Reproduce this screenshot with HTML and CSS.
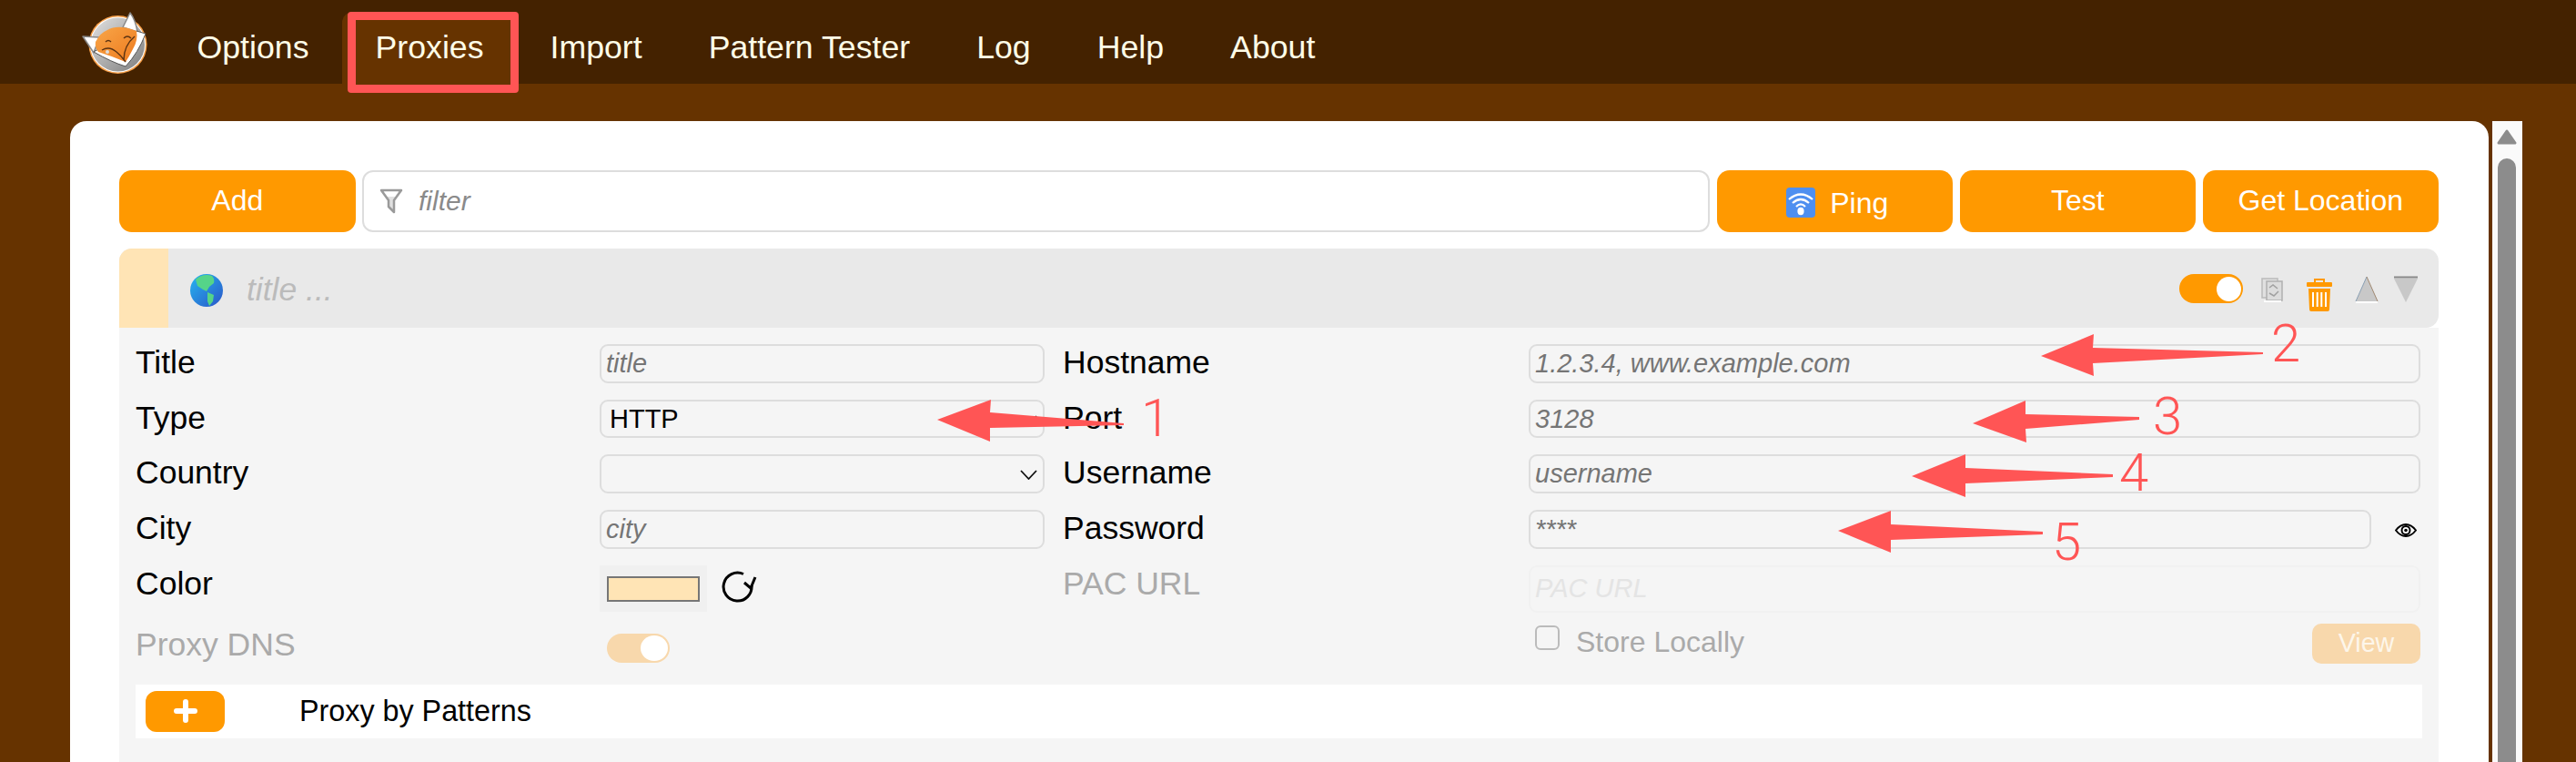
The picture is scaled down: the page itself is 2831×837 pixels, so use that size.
FILE: index.html
```html
<!DOCTYPE html>
<html lang="en">
<head>
<meta charset="utf-8">
<title>FoxyProxy Options</title>
<link rel="stylesheet" href="styles.css">
</head>
<body>
<header class="topbar">
  <svg class="logo" viewBox="90 12 75 70" width="75" height="70" aria-hidden="true">
    <defs>
      <linearGradient id="disc" x1="0" y1="0" x2="1" y2="1"><stop offset="0" stop-color="#e2e2e2"/><stop offset="1" stop-color="#7d7d7d"/></linearGradient>
      <linearGradient id="face" x1="0" y1="0" x2="1" y2="1"><stop offset="0" stop-color="#f8a648"/><stop offset="1" stop-color="#ee7a1e"/></linearGradient>
    </defs>
    <circle cx="129.5" cy="49" r="32" fill="#f7a04a"/>
    <circle cx="129.5" cy="49" r="30.500" fill="#fff"/>
    <circle cx="129.5" cy="49" r="29.500" fill="url(#disc)"/>
    <path d="M91 40 L109 41 L103 58 Z" fill="#fff" stroke="#888" stroke-width="1.500" stroke-linejoin="round"/>
    <path d="M143 14 L135 30 L151 35 Q149 22 143 14 Z" fill="#fff" stroke="#888" stroke-width="1.500" stroke-linejoin="round"/>
    <path d="M103 57 Q122 68 138 73 Q152 58 160 37 L150 34 L137 62 L108 54 Z" fill="#fff" stroke="#555" stroke-width="1"/>
    <path d="M105 46 Q110 36 118 33 Q130 26 150 34 Q152 44 146 54 Q142 62 138 68 Q124 62 108 57 Q104 52 105 46 Z" fill="url(#face)"/>
    <path d="M112 55 Q120 50 128 57 Q133 61 138 68 M136 66 Q136 50 148 40 M136 42 Q140 38 144 42 M116 46 Q119 43 122 46" fill="none" stroke="#5c3312" stroke-width="1.400"/>
    <circle cx="118" cy="57" r="2" fill="#ddd"/>
  </svg>
  <nav class="tabs">
    <a class="tab">Options</a>
    <a class="tab tab-active">Proxies</a>
    <a class="tab">Import</a>
    <a class="tab">Pattern Tester</a>
    <a class="tab">Log</a>
    <a class="tab">Help</a>
    <a class="tab">About</a>
  </nav>
</header>

<main class="stage">
  <section class="card">
    <div class="toolbar">
      <button class="btn">Add</button>
      <label class="filter">
        <svg class="filter-icon" viewBox="0 0 26 28" width="26" height="28" aria-hidden="true"><path d="M2 2 H24 L16 13 V26 L10 20 V13 Z" fill="#e0e0e0" stroke="#9a9a9a" stroke-width="2.500" stroke-linejoin="round"/><path d="M5 3.500 H21 L17 9 H9 Z" fill="#fff"/></svg>
        <input class="filter-input" type="text" placeholder="filter">
      </label>
      <button class="btn btn-ping">
        <svg class="ping-icon" viewBox="0 0 32 33" width="32" height="33" aria-hidden="true"><rect width="32" height="33" rx="4" fill="#4e8ff0"/><path d="M3 13 Q16 2 29 13 M7 17 Q16 9 25 17 M11 21 Q16 16 21 21" fill="none" stroke="#fff" stroke-width="2.200"/><ellipse cx="16" cy="26" rx="3.600" ry="4.200" fill="#fff"/></svg>
        <span class="ping-label">Ping</span>
      </button>
      <button class="btn">Test</button>
      <button class="btn">Get Location</button>
    </div>

    <article class="proxy">
      <div class="proxy-head">
        <span class="swatch"></span>
        <svg class="globe" viewBox="0 0 36 36" width="36" height="36" aria-hidden="true">
          <defs><linearGradient id="sea" x1="0" y1="0" x2="1" y2="1"><stop offset="0" stop-color="#27b7f0"/><stop offset="1" stop-color="#2a55c8"/></linearGradient></defs>
          <circle cx="18" cy="18" r="18" fill="url(#sea)"/>
          <path d="M6 6 Q14 -1 24 2 Q27 5 26 10 L21 14 L18 19 L14 17 L8 13 Z M19 20 L26 23 L25 30 L21 35 L19 30 Z" fill="#55d489"/>
        </svg>
        <span class="proxy-title">title ...</span>
        <div class="head-tools">
          <span class="toggle"></span>
          <svg class="tool-copy" viewBox="0 0 24 27" width="24" height="27" aria-hidden="true"><rect x="1" y="1" width="17" height="21" fill="#e0e0e0" stroke="#bbb" stroke-width="1.500"/><rect x="6" y="4" width="17" height="21" fill="#dcdcdc" stroke="#b0b0b0" stroke-width="1.500"/><path d="M9 11 L13 8 L18 12 M9 17 L14 20 L19 15" fill="none" stroke="#a0a0a0" stroke-width="1.500"/><path d="M3 26 H22" stroke="#fff" stroke-width="2"/></svg>
          <svg class="tool-trash" viewBox="0 0 28 36" width="28" height="36" aria-hidden="true"><path d="M9 5 V1 H19 V5" fill="none" stroke="#f90" stroke-width="2"/><rect y="4" width="28" height="5" rx="1" fill="#f90"/><path d="M2 11 H26 L25 34 Q25 36 23 36 H5 Q3 36 3 34 Z" fill="#f90"/><path d="M7 15 V31 M11.700 15 V31 M16.300 15 V31 M21 15 V31" stroke="#fff" stroke-width="2"/></svg>
          <svg class="tool-up" viewBox="0 0 26 30" width="26" height="30" aria-hidden="true"><path d="M13 1 L25 28 H1 Z" fill="#c8c8c8"/><path d="M13 1 L1 28" stroke="#8aa0b4" stroke-width="1"/><path d="M13 1 L25 28" stroke="#a08870" stroke-width="1"/><path d="M1 29 H25" stroke="#fff" stroke-width="2"/></svg>
          <svg class="tool-down" viewBox="0 0 26 30" width="26" height="30" aria-hidden="true"><path d="M0 3 H26 L13 29 Z" fill="#c8c8c8"/><path d="M0 1.500 H26" stroke="#888" stroke-width="2"/></svg>
        </div>
      </div>

      <div class="proxy-body">
        <form class="fields">
          <label class="lbl">Title</label>
          <input class="field" type="text" placeholder="title">
          <label class="lbl">Hostname</label>
          <input class="field" type="text" placeholder="1.2.3.4, www.example.com">

          <label class="lbl">Type</label>
          <div class="select-wrap">
            <select class="field field-select"><option>HTTP</option></select>
            <svg class="chevron" viewBox="0 0 19 11" width="19" height="11" aria-hidden="true"><path d="M1 1 L9.500 10 L18 1" fill="none" stroke="#111" stroke-width="1.800"/></svg>
          </div>
          <label class="lbl">Port</label>
          <input class="field" type="text" placeholder="3128">

          <label class="lbl">Country</label>
          <div class="select-wrap">
            <select class="field field-select"><option></option></select>
            <svg class="chevron" viewBox="0 0 19 11" width="19" height="11" aria-hidden="true"><path d="M1 1 L9.500 10 L18 1" fill="none" stroke="#111" stroke-width="1.800"/></svg>
          </div>
          <label class="lbl">Username</label>
          <input class="field" type="text" placeholder="username">

          <label class="lbl">City</label>
          <input class="field" type="text" placeholder="city">
          <label class="lbl">Password</label>
          <div class="pass-wrap">
            <input class="field" type="password" placeholder="****">
            <svg class="eye" viewBox="0 0 24 15" width="24" height="15" aria-hidden="true"><path d="M1 7.500 Q6 1 12 1 T23 7.500 Q18 14 12 14 T1 7.500 Z" fill="#fff" stroke="#000" stroke-width="2"/><circle cx="12" cy="7.500" r="4.500" fill="none" stroke="#000" stroke-width="2"/><circle cx="12" cy="7.500" r="1.800" fill="#000"/></svg>
          </div>

          <label class="lbl">Color</label>
          <div class="color-cell">
            <span class="color-box"><span class="color-fill"></span></span>
            <svg class="refresh" viewBox="0 0 40 36" width="40" height="36" aria-hidden="true"><path d="M25 4.500 A15.500 15.500 0 1 0 34 17" fill="none" stroke="#000" stroke-width="3"/><path d="M26 14 L33 20 L38 8" fill="none" stroke="#000" stroke-width="3"/></svg>
          </div>
          <label class="lbl lbl-off">PAC URL</label>
          <input class="field field-off" type="text" placeholder="PAC URL" disabled>

          <label class="lbl lbl-off dns-label">Proxy DNS</label>
          <div class="row-last dns-cell"><span class="toggle toggle-off"></span></div>
          <span class="row-last"></span>
          <div class="row-last store-cell">
            <label class="store"><input class="check" type="checkbox" disabled><span>Store Locally</span></label>
            <button class="view" type="button">View</button>
          </div>
        </form>

        <div class="pattern-row">
          <button class="plus" type="button"><svg viewBox="0 0 26 26" width="26" height="26" aria-hidden="true"><path d="M13 3 V23 M3 13 H23" stroke="#fff" stroke-width="6" stroke-linecap="round"/></svg></button>
          <span class="pattern-label">Proxy by Patterns</span>
        </div>
      </div>
    </article>
  </section>

  <aside class="scrollbar" aria-hidden="true">
    <svg class="scroll-up" viewBox="0 0 22 18" width="22" height="18"><path d="M11 2 L20 15 H2 Z" fill="#8c8c8c" stroke="#8c8c8c" stroke-width="3" stroke-linejoin="round"/></svg>
    <span class="scroll-thumb"></span>
  </aside>
</main>

<div class="notes">
  <span class="note-box"></span>
  <svg class="note-arrows" viewBox="0 0 2831 837" width="2831" height="837" aria-hidden="true">
    <path d="M1030 461 L1089 439 L1088 453 L1235 465 L1235 467 L1088 470 L1088 485 Z"/>
    <path d="M2243 391 L2301 367 L2300 382 L2487 387 L2487 389 L2300 399 L2301 413 Z"/>
    <path d="M2168 465 L2226 440 L2226 455 L2351 458 L2351 461 L2226 471 L2227 486 Z"/>
    <path d="M2101 523 L2160 499 L2160 514 L2322 521 L2322 524 L2160 531 L2160 546 Z"/>
    <path d="M2020 583 L2078 561 L2078 576 L2245 584 L2245 587 L2078 593 L2078 607 Z"/>
  </svg>
  <span class="num num-1">1</span>
  <span class="num num-2">2</span>
  <span class="num num-3">3</span>
  <span class="num num-4">4</span>
  <span class="num num-5">5</span>
</div>
</body>
</html>
```

FILE: styles.css
```css
* { box-sizing: border-box; }
html, body { margin: 0; height: 837px; overflow: hidden; }
body {
  position: relative;
  background: #663300;
  font-family: "Liberation Sans", Arial, sans-serif;
  color: #000;
}

/* top bar */
.topbar { display: flex; height: 92px; background: #442200; padding-left: 90px; }
.logo { margin-top: 12px; flex: none; }
.tabs { display: flex; margin-left: 15px; }
.tab {
  display: block;
  margin-top: 13px;
  padding: 19px 36.500px 0;
  font-size: 35.700px;
  line-height: 41px;
  color: #fffde8;
  border-radius: 12px 12px 0 0;
}
.tab-active { background: #663300; }

/* page frame */
.stage { display: flex; height: 745px; padding: 41px 0 0 77px; overflow: hidden; }
.card {
  flex: none;
  display: flex;
  flex-direction: column;
  width: 2657.500px;
  height: 704px;
  padding: 54px 54.500px 0 54px;
  background: #fff;
  border-radius: 18px 18px 0 0;
}
.scrollbar {
  flex: none;
  display: flex;
  flex-direction: column;
  align-items: center;
  width: 33.500px;
  height: 704px;
  margin-left: 4px;
  padding-top: 9px;
  background: #fafafa;
}
.scroll-thumb { width: 20px; flex: 1; margin-top: 14px; background: #8c8c8c; border-radius: 10px 10px 0 0; }

/* toolbar */
.toolbar { display: flex; gap: 7.500px; height: 68px; }
.btn {
  flex: none;
  width: 259.500px;
  border: 0;
  border-radius: 14px;
  background: #ff9900;
  color: #fff;
  font: 32px/1 "Liberation Sans", Arial, sans-serif;
  padding: 0 0 2px;
}
.btn-ping { display: flex; align-items: center; justify-content: center; gap: 16px; padding: 0 0 0 6px; }
.ping-label { padding-top: 4px; }
.ping-icon { flex: none; margin-top: 3px; }
.filter {
  flex: 1;
  display: flex;
  align-items: center;
  padding-left: 17px;
  border: 2px solid #ddd;
  border-radius: 12px;
  background: #fff;
}
.filter-icon { flex: none; }
.filter-input {
  flex: 1;
  min-width: 0;
  margin-left: 17px;
  padding: 0;
  border: 0;
  outline: 0;
  background: transparent;
  font: italic 30px "Liberation Sans", Arial, sans-serif;
}
.filter-input::placeholder { color: #8a8a8a; opacity: 1; }

/* proxy entry */
.proxy { flex: 1; display: flex; flex-direction: column; margin-top: 18px; }
.proxy-head {
  display: flex;
  height: 87px;
  flex: none;
  background: #e9e9e9;
  border-radius: 14px 14px 14px 0;
  overflow: hidden;
}
.swatch { flex: none; width: 54px; background: #ffe4b5; }
.globe { flex: none; margin: 28px 0 0 24px; }
.proxy-title {
  margin: 23px 0 0 26px;
  font: italic 35.500px/44px "Liberation Sans", Arial, sans-serif;
  color: #bbb;
}
.head-tools { display: flex; align-items: flex-start; margin-left: auto; padding: 28px 23px 0 0; }
.toggle {
  position: relative;
  display: block;
  flex: none;
  width: 70px;
  height: 32px;
  border-radius: 16px;
  background: #ff9900;
}
.toggle::after {
  content: "";
  position: absolute;
  top: 2.500px;
  right: 2px;
  width: 27px;
  height: 27px;
  border-radius: 50%;
  background: #fff;
}
.tool-copy { margin: 4px 0 0 20px; }
.tool-trash { margin: 5px 0 0 26px; }
.tool-up { margin: 2px 0 0 25px; }
.tool-down { margin: 2px 0 0 17px; }

/* form */
.proxy-body { flex: 1; padding: 18px 18px 0; background: #f5f5f5; }
.fields {
  display: grid;
  grid-template-columns: 490px 489px 492px 980px;
  grid-template-rows: repeat(4, 42.700px) 52px 44px;
  gap: 18px 20px;
}
.lbl { font-size: 35.500px; line-height: 41px; }
.lbl-off { color: #aaa; }
.field {
  display: block;
  width: 100%;
  height: 100%;
  min-width: 0;
  padding: 0 5px;
  border: 2px solid #ddd;
  border-radius: 9px;
  background: transparent;
  outline: 0;
  color: #000;
  font: 29px "Liberation Sans", Arial, sans-serif;
}
.field::placeholder { color: #757575; font-style: italic; opacity: 1; }
.field-select { appearance: none; -webkit-appearance: none; padding-left: 9px; }
.field-off { border-color: #f1f1f1; }
.field-off::placeholder { color: #e4e4e4; }
.select-wrap { position: relative; }
.chevron { position: absolute; right: 8px; top: 17px; }
.pass-wrap { display: flex; align-items: center; }
.pass-wrap .field { flex: none; width: 926px; }
.eye { flex: none; margin: 3px 0 0 26px; }
.color-cell { display: flex; align-items: flex-start; }
.color-box {
  flex: none;
  display: block;
  width: 118px;
  height: 51px;
  padding: 12px 8px;
  background: #f0f0f0;
}
.color-fill { display: block; height: 28px; background: #ffe4b5; border: 2px solid #767676; }
.refresh { flex: none; margin: 5px 0 0 15px; }
.row-last { margin-top: -6px; }
.dns-label { margin-top: -3px; }
.dns-cell { padding: 11px 0 0 8px; }
.toggle-off { width: 69px; background: #f8d8ac; }
.toggle-off::after { width: 30px; height: 28px; top: 2px; }
.store-cell { display: flex; justify-content: space-between; align-items: flex-start; }
.store { display: flex; align-items: flex-start; color: #aaa; font-size: 32px; line-height: 38px; }
.check {
  appearance: none;
  -webkit-appearance: none;
  flex: none;
  width: 27px;
  height: 27px;
  margin: 2px 18px 0 7px;
  border: 2px solid #bbb;
  border-radius: 6px;
  background: #f5f5f5;
}
.store span { padding-top: 1.500px; }
.view {
  width: 119px;
  height: 44px;
  padding: 0;
  border: 0;
  border-radius: 10px;
  background: #f8d8ac;
  color: #fdf6ea;
  font: 28.600px "Liberation Sans", Arial, sans-serif;
}

/* patterns */
.pattern-row { display: flex; align-items: center; height: 59px; margin-top: 17px; background: #fff; padding-left: 11px; }
.plus {
  flex: none;
  display: flex;
  align-items: center;
  justify-content: center;
  width: 87px;
  height: 45px;
  padding: 0;
  border: 0;
  border-radius: 12px;
  background: #ff9900;
}
.pattern-label { margin-left: 82px; font-size: 32.300px; }

/* red annotations drawn over the screenshot */
.notes { position: absolute; inset: 0; pointer-events: none; }
.note-box {
  position: absolute;
  left: 382px;
  top: 13px;
  width: 188px;
  height: 89px;
  border: 9.500px solid #ff5555;
  border-radius: 4px;
}
.note-arrows { position: absolute; left: 0; top: 0; fill: #ff5555; }
.num {
  position: absolute;
  font: 300 58px/58px Roboto, sans-serif;
  color: #ff5555;
}
.num-1 { left: 1254px; top: 430px; }
.num-2 { left: 2496px; top: 348px; }
.num-3 { left: 2366px; top: 428px; }
.num-4 { left: 2329px; top: 490px; }
.num-5 { left: 2255px; top: 566px; }
```
